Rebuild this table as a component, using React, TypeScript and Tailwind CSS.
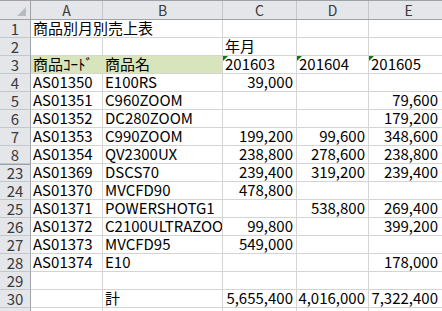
import React from 'react';

type Row = { n: string; a?: string; b?: string; c?: string; d?: string; e?: string; hiddenAbove?: boolean };

const rows: Row[] = [
  { n: '1', a: '商品別月別売上表' },
  { n: '2', c: '年月' },
  { n: '3', a: '商品ｺｰﾄﾞ', b: '商品名', c: '201603', d: '201604', e: '201605' },
  { n: '4', a: 'AS01350', b: 'E100RS', c: '39,000' },
  { n: '5', a: 'AS01351', b: 'C960ZOOM', e: '79,600' },
  { n: '6', a: 'AS01352', b: 'DC280ZOOM', e: '179,200' },
  { n: '7', a: 'AS01353', b: 'C990ZOOM', c: '199,200', d: '99,600', e: '348,600' },
  { n: '8', a: 'AS01354', b: 'QV2300UX', c: '238,800', d: '278,600', e: '238,800' },
  { n: '23', a: 'AS01369', b: 'DSCS70', c: '239,400', d: '319,200', e: '239,400', hiddenAbove: true },
  { n: '24', a: 'AS01370', b: 'MVCFD90', c: '478,800' },
  { n: '25', a: 'AS01371', b: 'POWERSHOTG1', d: '538,800', e: '269,400' },
  { n: '26', a: 'AS01372', b: 'C2100ULTRAZOOM', c: '99,800', e: '399,200' },
  { n: '27', a: 'AS01373', b: 'MVCFD95', c: '549,000' },
  { n: '28', a: 'AS01374', b: 'E10', e: '178,000' },
  { n: '29' },
  { n: '30', b: '計', c: '5,655,400', d: '4,016,000', e: '7,322,400' },
  { n: '' },
];

// green "number stored as text" marker
const Flag: React.FC = () => (
  <svg className="absolute left-0 top-0" width="5" height="5" viewBox="0 0 5 5">
    <polygon points="0,0 5,0 0,5" fill="#0f7a0f" />
  </svg>
);

const RowHead: React.FC<{ n: string; mark?: boolean }> = ({ n, mark }) => (
  <div
    className={`w-[31px] shrink-0 h-full flex items-center justify-center border-r border-b border-r-[#9ea3aa] border-b-[#c3c7cc] bg-[#e4e6ea] text-[#3a3a3a] ${
      mark ? 'shadow-[inset_0_1px_0_#9ea3aa]' : ''
    }`}
  >
    {n}
  </div>
);

const App: React.FC = () => {
  return (
    <div className="w-[442px] h-[311px] overflow-hidden bg-white text-[15px] leading-[15px] text-black font-['Noto_Sans_CJK_JP','Noto_Sans_CJK_SC',sans-serif]">
      {/* column headers */}
      <div className="flex h-[20px] border-t border-b border-[#9ea3aa] bg-[#e4e6ea] text-[14px] text-[#3a3a3a]">
        <div className="relative w-[31px] shrink-0 border-r border-[#9ea3aa]">
          <svg className="absolute right-[4px] bottom-[3px]" width="9" height="9" viewBox="0 0 9 9">
            <polygon points="9,0 9,9 0,9" fill="#b8bcc2" />
          </svg>
        </div>
        <div className="w-[72px] shrink-0 flex items-center justify-center border-r border-[#c3c7cc]">A</div>
        <div className="w-[120px] shrink-0 flex items-center justify-center border-r border-[#c3c7cc]">B</div>
        <div className="w-[74px] shrink-0 flex items-center justify-center border-r border-[#c3c7cc]">C</div>
        <div className="w-[72px] shrink-0 flex items-center justify-center border-r border-[#c3c7cc]">D</div>
        <div className="w-[80px] shrink-0 flex items-center justify-center border-r border-[#c3c7cc]">E</div>
      </div>

      {rows.map((r) => {
        const head = r.n === '3';
        const title = r.n === '1';
        return (
          <div key={r.n || 'end'} className="flex h-[18px]">
            <RowHead n={r.n} mark={r.hiddenAbove} />
            <div
              className={`w-[72px] shrink-0 flex items-end pb-[2px] pl-[2px] whitespace-nowrap border-b border-r border-[#d4d4d4] ${
                head ? 'bg-[#d8e4bc] border-r-[#d8e4bc]' : ''
              } ${title ? 'relative z-10 overflow-visible border-r-white' : 'overflow-hidden'}`}
            >
              {r.a}
            </div>
            <div
              className={`w-[120px] shrink-0 flex items-end pb-[2px] pl-[2px] whitespace-nowrap overflow-hidden border-b border-r border-[#d4d4d4] ${
                head ? 'bg-[#d8e4bc]' : ''
              }`}
            >
              {r.b}
            </div>
            <div
              className={`relative w-[74px] shrink-0 flex items-end pb-[2px] whitespace-nowrap overflow-hidden border-b border-r border-[#d4d4d4] ${
                head || r.n === '2' ? 'justify-start pl-[2px]' : 'justify-end pr-[3px]'
              }`}
            >
              {head && <Flag />}
              {r.c}
            </div>
            <div
              className={`relative w-[72px] shrink-0 flex items-end pb-[2px] whitespace-nowrap overflow-hidden border-b border-r border-[#d4d4d4] ${
                head ? 'justify-start pl-[2px]' : 'justify-end pr-[3px]'
              }`}
            >
              {head && <Flag />}
              {r.d}
            </div>
            <div
              className={`relative w-[80px] shrink-0 flex items-end pb-[2px] whitespace-nowrap overflow-hidden border-b border-r border-[#d4d4d4] ${
                head ? 'justify-start pl-[2px]' : 'justify-end pr-[10px]'
              }`}
            >
              {head && <Flag />}
              {r.e}
            </div>
          </div>
        );
      })}
    </div>
  );
};

export default App;
